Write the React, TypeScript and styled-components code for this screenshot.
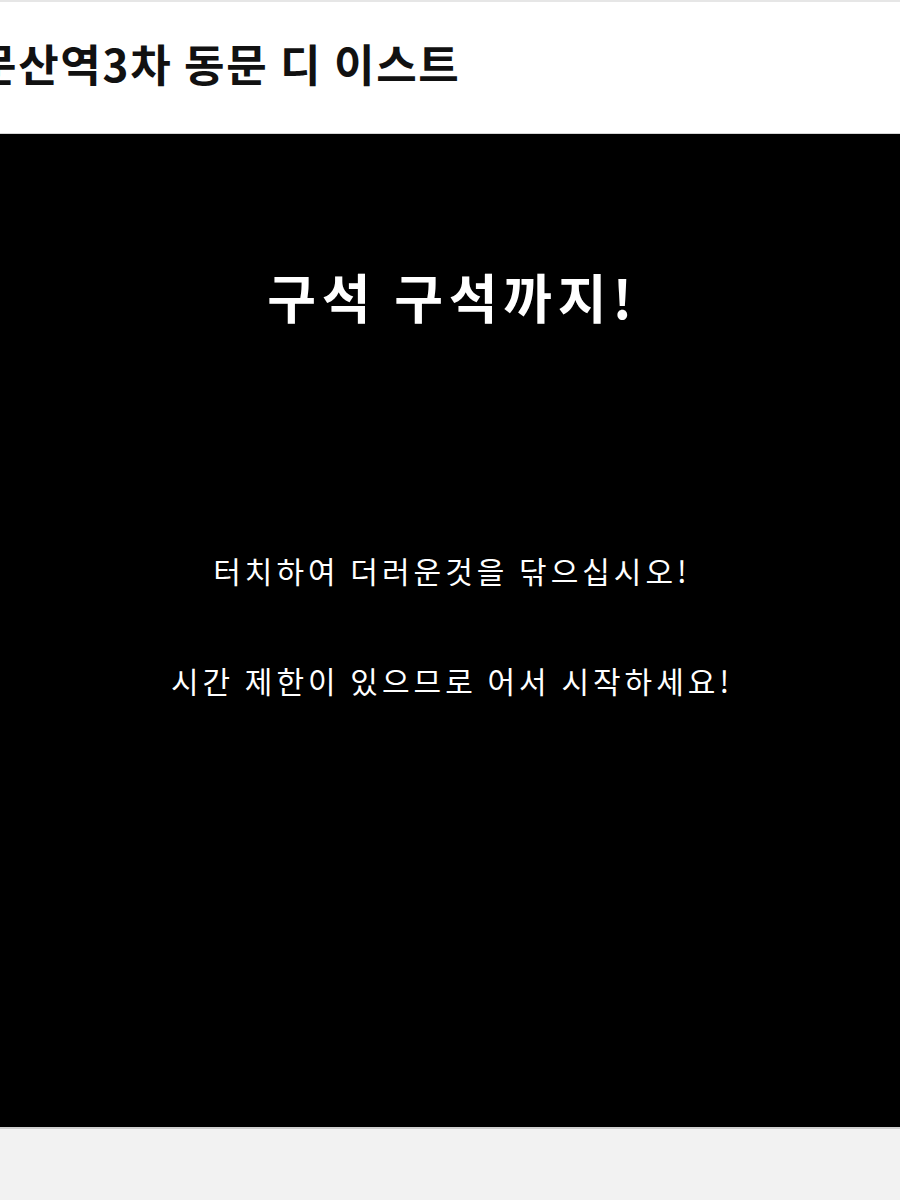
import React from "react";
import styled, { createGlobalStyle } from "styled-components";

const Global = createGlobalStyle`
  html, body { margin: 0; padding: 0; background: #f2f2f2; }
  body { font-family: "Noto Sans CJK KR", "Noto Sans", sans-serif; }
`;

const Page = styled.div`
  display: flex;
  flex-direction: column;
  width: 900px;
  min-height: 1200px;
  background: #f2f2f2;
  border-top: 2px solid #e6e6e6;
  box-sizing: border-box;
`;

const Header = styled.header`
  height: 132px;
  box-sizing: border-box;
  padding-bottom: 9px;
  background: #ffffff;
  border-bottom: 1px solid #d6d6d6;
  display: flex;
  align-items: center;
  overflow: hidden;
`;

const HeaderTitle = styled.h1`
  margin: 0 0 0 -24px;
  font-family: "Noto Sans CJK KR", sans-serif;
  font-weight: 700;
  font-size: 44px;
  color: #111;
  white-space: nowrap;
  letter-spacing: 1.7px;
`;

const Stage = styled.main`
  height: 993px;
  background: #000;
  border-bottom: 2px solid #cfcfcf;
  display: flex;
  flex-direction: column;
  align-items: center;
  color: #fff;
`;

const Title = styled.h2`
  margin: 127px 0 0;
  padding-left: 5px;
  font-family: "Noto Sans CJK KR", sans-serif;
  font-weight: 700;
  font-size: 53px;
  line-height: 70px;
  letter-spacing: 5.8px;
`;

const Line = styled.p<{ $top: number }>`
  margin: ${(p) => p.$top}px 0 0;
  padding-left: 4px;
  font-family: "Noto Sans CJK KR", sans-serif;
  font-weight: 400;
  font-size: 30px;
  line-height: 40px;
  letter-spacing: 4px;
`;

export default function App() {
  return (
    <>
      <Global />
      <Page>
        <Header>
          <HeaderTitle>문산역3차 동문 디 이스트</HeaderTitle>
        </Header>
        <Stage>
          <Title>구석 구석까지!</Title>
          <Line $top={219}>터치하여 더러운것을 닦으십시오!</Line>
          <Line $top={70}>시간 제한이 있으므로 어서 시작하세요!</Line>
        </Stage>
      </Page>
    </>
  );
}
